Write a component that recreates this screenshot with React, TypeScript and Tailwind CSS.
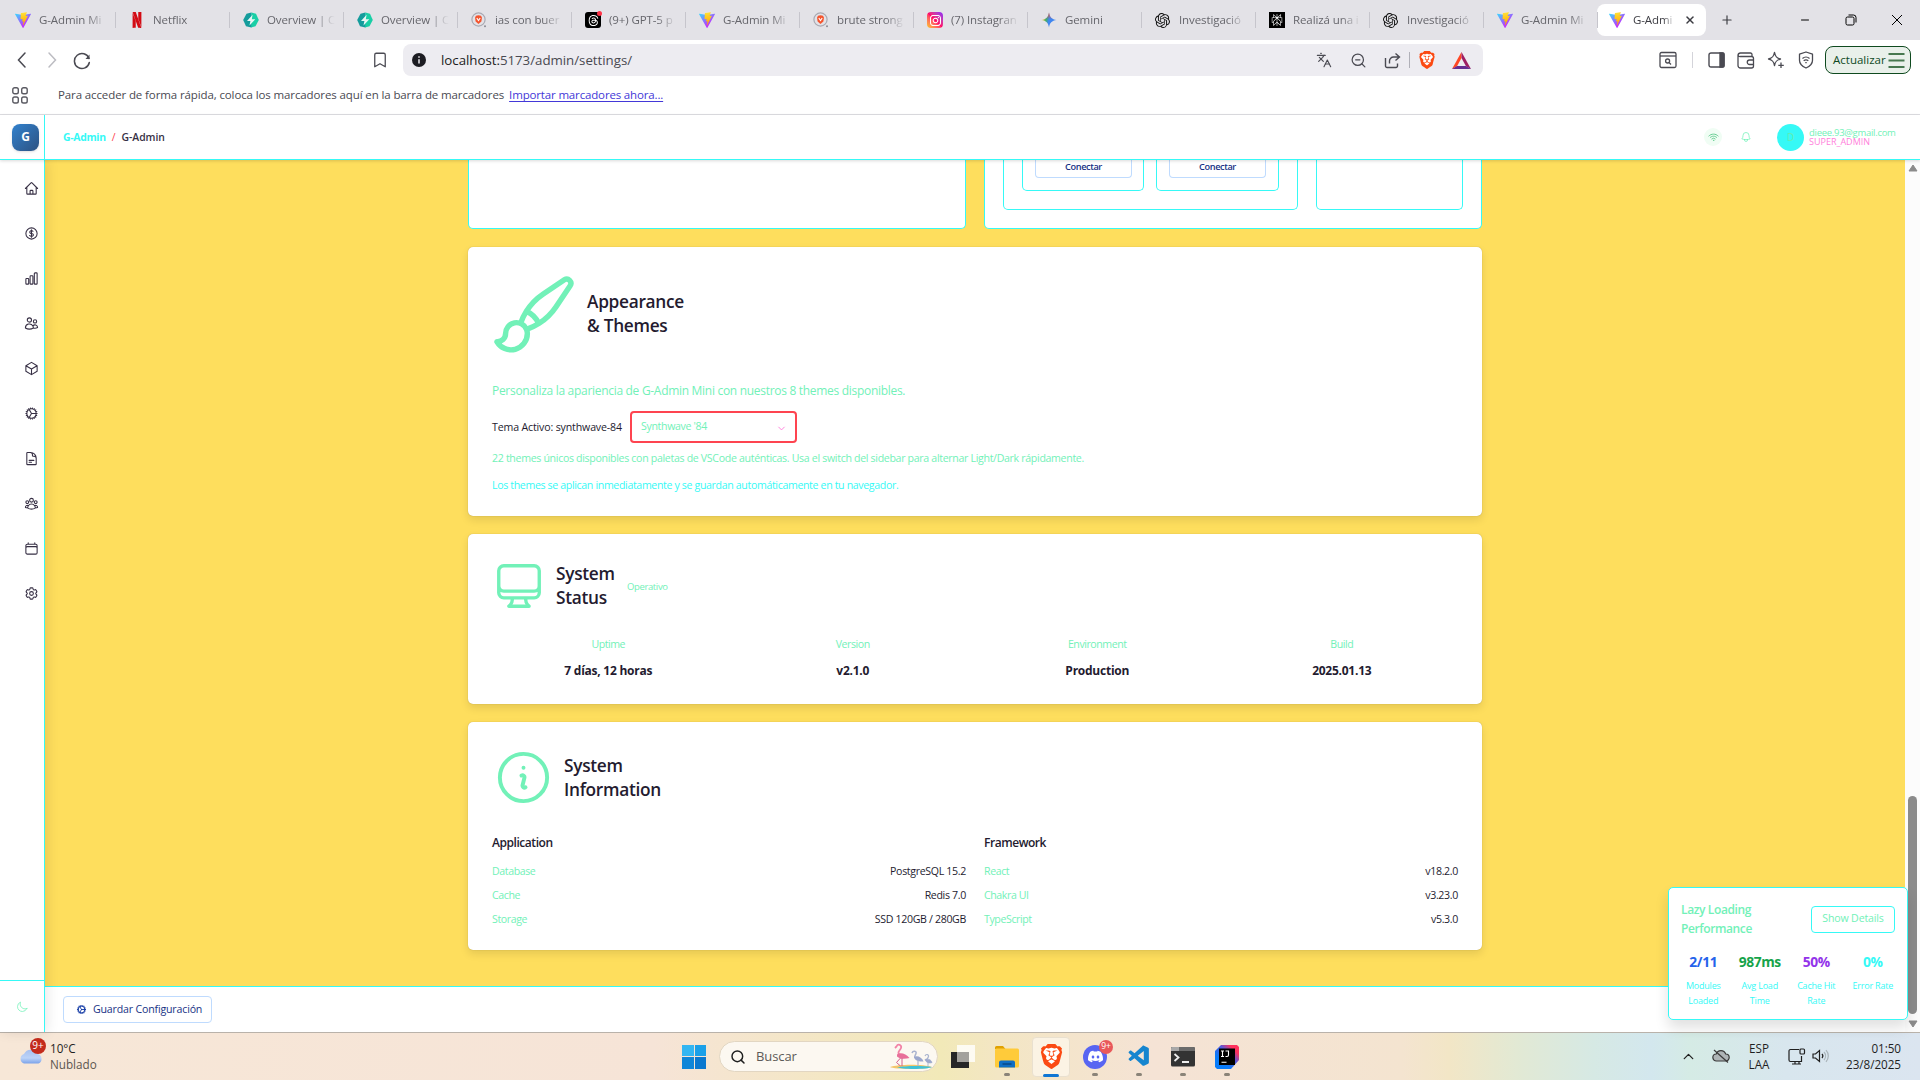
import type { ReactNode } from "react";
import {
  HiOutlineHome, HiOutlineCurrencyDollar, HiOutlineChartBar, HiOutlineUsers, HiOutlineCube, HiOutlineCog,
  HiOutlineDocumentText, HiOutlineUserGroup, HiOutlineCalendar, HiOutlineCog6Tooth, HiOutlineMoon, HiOutlineWifi,
  HiOutlineBell, HiOutlinePaintBrush, HiOutlineComputerDesktop, HiOutlineInformationCircle, HiOutlineChevronDown,
} from "react-icons/hi2";
import { SiNetflix, SiBrave, SiOpenai, SiThreads, SiInstagram, SiPerplexity, SiDiscord } from "react-icons/si";
import { VscVscode } from "react-icons/vsc";
import { Languages, ZoomOut, X, Plus, Minus, Bookmark, ChevronUp, Search } from "lucide-react";

const ViteIcon = () => (
  <svg width="16" height="16" viewBox="0 0 256 257" className="shrink-0">
    <defs>
      <linearGradient id="vite-a" x1="0%" x2="58%" y1="8%" y2="79%">
        <stop offset="0%" stopColor="#41D1FF" />
        <stop offset="100%" stopColor="#BD34FE" />
      </linearGradient>
      <linearGradient id="vite-b" x1="43%" x2="50%" y1="2%" y2="89%">
        <stop offset="0%" stopColor="#FFEA83" />
        <stop offset="8%" stopColor="#FFDD35" />
        <stop offset="100%" stopColor="#FFA800" />
      </linearGradient>
    </defs>
    <path fill="url(#vite-a)" d="M255.153 37.938L134.897 252.976c-2.483 4.44-8.862 4.466-11.382.048L.875 37.958c-2.746-4.814 1.371-10.646 6.827-9.67l120.385 21.517a6.537 6.537 0 0 0 2.322-.004l117.867-21.483c5.438-.991 9.574 4.796 6.877 9.62Z" />
    <path fill="url(#vite-b)" d="M185.432.063L96.44 17.501a3.268 3.268 0 0 0-2.634 3.014l-5.474 92.456a3.268 3.268 0 0 0 3.997 3.378l24.777-5.718c2.318-.535 4.413 1.507 3.936 3.838l-7.361 36.047c-.495 2.426 1.782 4.5 4.151 3.78l15.304-4.649c2.372-.72 4.652 1.36 4.15 3.788l-11.698 56.621c-.732 3.542 3.979 5.473 5.943 2.437l1.313-2.028l72.516-144.72c1.215-2.423-.88-5.186-3.54-4.672l-25.505 4.922c-2.396.462-4.435-1.77-3.759-4.114l16.646-57.705c.677-2.35-1.37-4.583-3.769-4.113Z" />
  </svg>
);

const OverviewIcon = () => (
  <svg width="16" height="16" viewBox="0 0 16 16" className="shrink-0">
    <path d="M8.300 0.500 13 1.800 15.800 8 12.500 14.200 8 15.500z" fill="#19cfa6" />
    <path d="M8.300 0.500 3.500 1.800 0.200 8 3 14.200 8.300 15.500z" fill="#149c9c" />
    <path d="M9.600 2.800 4 9h3.400l-.9 4.500L12.300 7.200H8.800z" fill="#e9f7f5" />
  </svg>
);

const BraveSearchIcon = () => (
  <svg width="16" height="16" viewBox="0 0 16 16" className="shrink-0">
    <circle cx="7.5" cy="7.5" r="6.6" fill="none" stroke="#a9a9b2" strokeWidth="1.2" />
    <path d="M7.5 3.2 10 3.7l1 1.7-.6 4L7.5 12 4.6 9.4 4 5.4l1-1.7z" fill="#f4552f" />
    <path d="M5.8 6l1.7 2.6L9.2 6" fill="none" stroke="#fff" strokeWidth="1.1" />
    <circle cx="14" cy="14.2" r="1" fill="#8d8d96" />
  </svg>
);

const ThreadsIcon = () => (
  <span className="relative flex size-4 shrink-0 items-center justify-center rounded-[3px] bg-black text-white">
    <SiThreads size={11} />
    <span className="absolute -top-px -right-px size-[5px] rounded-full bg-[#ff3347]" />
  </span>
);

const InstagramIcon = () => (
  <span className="flex size-4 shrink-0 items-center justify-center rounded-[4px] bg-linear-to-tr from-[#ffc400] via-[#ff0069] to-[#8a00ff] text-white">
    <SiInstagram size={11} />
  </span>
);

const GeminiIcon = () => (
  <svg width="16" height="16" viewBox="0 0 16 16" className="shrink-0">
    <defs>
      <linearGradient id="gem" x1="0" x2="1" y1="0.4" y2="0.6">
        <stop offset="0.05" stopColor="#f6c012" />
        <stop offset="0.3" stopColor="#3fae6a" />
        <stop offset="0.5" stopColor="#3f86f0" />
        <stop offset="1" stopColor="#3f86f0" />
      </linearGradient>
      <linearGradient id="gem2" x1="0" x2="0" y1="0" y2="1">
        <stop offset="0" stopColor="#f0453c" />
        <stop offset="0.45" stopColor="#f0453c" stopOpacity="0" />
      </linearGradient>
    </defs>
    <path d="M8 .5C8.600 5 11 7.400 15.500 8 11 8.600 8.600 11 8 15.500 7.400 11 5 8.600.5 8 5 7.400 7.400 5 8 .5z" fill="url(#gem)" />
    <path d="M8 .5C8.600 5 11 7.400 15.500 8 11 8.600 8.600 11 8 15.500 7.400 11 5 8.600.5 8 5 7.400 7.400 5 8 .5z" fill="url(#gem2)" />
  </svg>
);

const PerplexityIcon = () => (
  <span className="flex size-4 shrink-0 items-center justify-center bg-black text-white">
    <SiPerplexity size={12} />
  </span>
);

const tabs: { icon: ReactNode; title: string }[] = [
  { icon: <ViteIcon />, title: "G-Admin Mi" },
  { icon: <SiNetflix size={16} className="shrink-0 text-[#d30b14]" />, title: "Netflix" },
  { icon: <OverviewIcon />, title: "Overview | C" },
  { icon: <OverviewIcon />, title: "Overview | C" },
  { icon: <BraveSearchIcon />, title: "ias con buer" },
  { icon: <ThreadsIcon />, title: "(9+) GPT-5 p" },
  { icon: <ViteIcon />, title: "G-Admin Mi" },
  { icon: <BraveSearchIcon />, title: "brute strong" },
  { icon: <InstagramIcon />, title: "(7) Instagran" },
  { icon: <GeminiIcon />, title: "Gemini" },
  { icon: <SiOpenai size={15} className="mr-px shrink-0 text-[#111]" />, title: "Investigació" },
  { icon: <PerplexityIcon />, title: "Realizá una i" },
  { icon: <SiOpenai size={15} className="mr-px shrink-0 text-[#111]" />, title: "Investigació" },
  { icon: <ViteIcon />, title: "G-Admin Mi" },
];

const fade = "overflow-hidden whitespace-nowrap";

function TabStrip() {
  return (
    <div className="flex h-10 shrink-0 items-center bg-[#e3e2e7] text-[11.5px] tracking-[-0.1px] text-[#66666c]">
      {tabs.map((t, i) => (
        <div key={i} className="flex h-10 w-[114px] shrink-0 items-center pl-[15px]">
          {t.icon}
          <span className={`ml-2 w-[70px] [mask-image:linear-gradient(to_right,#000_68%,transparent_97%)] ${fade}`}>{t.title}</span>
          <span className="ml-auto h-4 w-px translate-x-[2px] bg-[#c6c5cc]" />
        </div>
      ))}
      <div className="ml-[1px] flex h-8 w-[109px] shrink-0 items-center rounded-lg bg-white pl-[12px] text-[#3c3c42]">
        <ViteIcon />
        <span className={`ml-2 w-[42px] [mask-image:linear-gradient(to_right,#000_72%,transparent)] ${fade}`}>G-Admi</span>
        <X size={12} strokeWidth={3} className="ml-[9px]" />
      </div>
      <Plus size={14} className="ml-[14px] text-[#3c3c42]" />
      <div className="ml-auto flex items-center pr-[17px] text-black">
        <Minus size={12} strokeWidth={2} className="mr-[34px]" />
        <svg width="12" height="12" viewBox="0 0 12 12" fill="none" stroke="currentColor" className="mr-[34px]">
          <rect x="1" y="3" width="8" height="8" rx="1.5" />
          <path d="M3.500 1h5a2.500 2.500 0 0 1 2.500 2.500v5" />
        </svg>
        <svg width="12" height="12" viewBox="0 0 12 12" fill="none" stroke="currentColor">
          <path d="M1 1l10 10M11 1L1 11" />
        </svg>
      </div>
    </div>
  );
}

const BraveIcon = ({ size }: { size: number }) => (
  <span className="relative flex items-center justify-center">
    <svg width={size} height={size} viewBox="0 0 24 24">
      <path d="M5 4l4-2h6l4 2 2 3-1 9-8 6-8-6-1-9z" fill="#fff" />
    </svg>
    <SiBrave size={size} className="absolute text-[#fb4a13]" />
  </span>
);

function Toolbar() {
  return (
    <div className="flex h-10 shrink-0 items-center bg-white text-[#4a4a52]">
      <svg width="76" height="20" viewBox="0 0 76 20" fill="none" stroke="currentColor" strokeWidth="1.500" className="ml-4" strokeLinecap="round">
        <path d="M9 3L2.500 10 9 17" />
        <path d="M33 3l6.500 7-6.500 7" stroke="#bcbcc2" />
        <path d="M73 8.500a7.500 7.500 0 1 0 .300 4" />
        <path d="M73.500 4.500v4.500H69.500z" fill="currentColor" stroke="none" />
      </svg>
      <Bookmark size={18} strokeWidth={1.7} className="ml-[279px]" />
      <div className="ml-[14px] flex h-8 w-[1080px] items-center rounded-lg bg-[#edecf1] pl-[9px]">
        <svg width="14" height="14" viewBox="0 0 14 14">
          <circle cx="7" cy="7" r="7" fill="#1c1c22" />
          <path d="M7 6.200v4.200M7 3.300v1.500" stroke="#edecf1" strokeWidth="1.500" />
        </svg>
        <span className="ml-[15px] w-[875px] pt-px text-[13.3px] tracking-[-0.03px] text-[#4a4a52]">
          <span className="text-[#1c1c22]">localhost:</span>5173/admin/settings/
        </span>
        <Languages size={16} strokeWidth={1.7} />
        <ZoomOut size={17} strokeWidth={1.7} className="ml-[18px]" />
        <svg width="17" height="17" viewBox="0 0 17 17" fill="none" stroke="currentColor" strokeWidth="1.400" className="ml-[17px]">
          <path d="M1.500 6v8a1.500 1.500 0 0 0 1.500 1.500h9a1.500 1.500 0 0 0 1.500-1.500v-2.500M5.500 11.500V9a4 4 0 0 1 4-4h5M11.500 1.500L15.500 5l-4 3.500" />
        </svg>
        <span className="mx-[8px] h-4 w-px bg-[#b0b0b8]" />
        <BraveIcon size={18} />
        <svg width="19" height="17" viewBox="0 0 19 17" className="ml-[16px]">
          <path d="M9.500 0L0 17l5-2.800L9.500 6z" fill="#ff4724" />
          <path d="M9.500 0L19 17l-5-2.800L9.500 6z" fill="#9e1f63" />
          <path d="M0 17h19l-5-3H5z" fill="#662d91" />
        </svg>
      </div>
      <svg width="18" height="18" viewBox="0 0 18 18" fill="none" stroke="currentColor" strokeWidth="1.300" className="ml-[176px]">
        <rect x="1" y="1.500" width="16" height="15" rx="1.500" />
        <path d="M1 5h16" />
        <circle cx="8.600" cy="10" r="2" />
        <path d="M10 11.500l2 2" />
      </svg>
      <span className="mx-[15px] h-4 w-px bg-[#d4d4da]" />
      <svg width="17" height="16" viewBox="0 0 17 16" fill="none" stroke="currentColor" strokeWidth="1.400">
        <rect x="1" y="1" width="15" height="14" rx="2" />
        <path d="M12 1h3a1 1 0 0 1 1 1v12a1 1 0 0 1-1 1h-3z" fill="currentColor" />
      </svg>
      <svg width="18" height="17" viewBox="0 0 18 17" fill="none" stroke="currentColor" strokeWidth="1.300" className="ml-[12px]">
        <path d="M15 4.500V2.500a1.500 1.500 0 0 0-1.500-1.500h-10A2.500 2.500 0 0 0 1 3.200V13.500A2.500 2.500 0 0 0 3.500 16h11a2 2 0 0 0 2-2V6.500a2 2 0 0 0-2-2h-11A2 2 0 0 1 1 3" />
        <path d="M17 8h-4.500a2 2 0 0 0 0 4.500H17" />
      </svg>
      <svg width="18" height="18" viewBox="0 0 18 18" fill="none" stroke="currentColor" strokeWidth="1.300" className="ml-[12px]" strokeLinejoin="round">
        <path d="M7.500 1.500c.8 4 2 5.500 6 6.500-4 1-5.200 2.500-6 6.500-.8-4-2-5.500-6-6.500 4-1 5.200-2.500 6-6.500zM14 11.500v5.500M11.300 14.300h5.500" />
      </svg>
      <svg width="16" height="18" viewBox="0 0 16 18" fill="none" stroke="currentColor" strokeWidth="1.300" className="ml-[13px]" strokeLinejoin="round">
        <path d="M8 1l6.500 2.200v6c0 3.800-3 6.300-6.500 7.800-3.500-1.500-6.500-4-6.500-7.800v-6z" />
        <path d="M4.500 7.500c2-1.800 5-1.800 7 0M5.700 9.700c1.400-1.100 3.200-1.100 4.600 0M7.300 11.700h1.400" />
      </svg>
      <div className="ml-[11px] flex h-7 w-[86px] items-center justify-between rounded-lg border border-[#0f4a1f] bg-[#e9f0ea] pr-[5px] pl-[7px] text-[11.5px] whitespace-nowrap text-[#0f4a1f]">
        Actualizar
        <svg width="17" height="15" viewBox="0 0 17 15" stroke="#47784f" strokeWidth="1.800">
          <path d="M.5 1h16M.5 7.500h16M.5 14h16" />
        </svg>
      </div>
    </div>
  );
}

function BookmarksBar() {
  return (
    <div className="flex h-[35px] shrink-0 items-center border-b border-[#dedee2] bg-white pb-[4px] pl-3 text-[11.5px] whitespace-nowrap text-[#4a4a52]">
      <svg width="17" height="17" viewBox="0 0 17 17" fill="none" stroke="#5a5a62" strokeWidth="1.400">
        <rect x=".8" y=".8" width="5.500" height="6" rx="1.800" />
        <rect x="9.700" y=".8" width="5.500" height="6" rx="1.800" />
        <rect x=".8" y="10" width="5.500" height="6" rx="1.800" />
        <rect x="9.700" y="10" width="5.500" height="6" rx="1.800" />
      </svg>
      <span className="ml-[29px] tracking-[-0.115px]">Para acceder de forma rápida, coloca los marcadores aquí en la barra de marcadores</span>
      <span className="ml-[5px] tracking-[-0.157px] text-[#4338d8] underline underline-offset-2">Importar marcadores ahora...</span>
    </div>
  );
}

function AppHeader() {
  return (
    <header className="relative z-10 flex h-[45px] shrink-0 border-b border-[#36f9f6] bg-white shadow-[0_1px_3px_rgba(0,0,0,0.15)]">
      <div className="flex w-[45px] items-center justify-end border-r border-[#36f9f6] pr-[5px]">
        <div className="flex size-[27px] items-center justify-center rounded-lg bg-linear-to-br from-[#3182ce] to-[#2c5282] text-[12px] font-bold text-white shadow-sm">G</div>
      </div>
      <div className="ml-[18px] flex items-center pt-px text-[10.4px]">
        <span className="font-bold tracking-[-0.3px] text-[#36f9f6]">G-Admin</span>
        <span className="mx-[6px] text-[#fe4450]">/</span>
        <span className="font-semibold tracking-[-0.05px] text-[#362f44]">G-Admin</span>
      </div>
      <div className="ml-auto flex items-center">
        <span className="flex size-[18px] items-center justify-center rounded-full bg-[#f0fdf4]">
          <HiOutlineWifi size={11} className="stroke-2 text-[#5cc98a]" />
        </span>
        <HiOutlineBell size={12} className="ml-[18px] text-[#72f1b8]" />
        <span className="ml-[25px] flex size-[27px] items-center justify-center rounded-full bg-[#36f9f6] text-[9.900px] text-[#62efae]">D</span>
        <div className="ml-[5px] w-[111px] whitespace-nowrap">
          <div className="h-[10px] text-[9.5px] leading-[11px] font-medium tracking-[-0.28px] text-[#72f1b8]">dieee.93@gmail.com</div>
          <div className="h-[10px] text-[9px] leading-[9px] text-[#ff7edb]">SUPER_ADMIN</div>
        </div>
      </div>
    </header>
  );
}

const nav = [
  HiOutlineHome, HiOutlineCurrencyDollar, HiOutlineChartBar, HiOutlineUsers, HiOutlineCube,
  HiOutlineCog, HiOutlineDocumentText, HiOutlineUserGroup, HiOutlineCalendar, HiOutlineCog6Tooth,
];

function Sidebar() {
  return (
    <aside className="relative z-[5] flex w-[45px] shrink-0 flex-col border-r border-[#36f9f6] bg-white shadow-[2px_0_12px_rgba(0,0,0,0.1)]">
      <nav className="flex h-[820px] flex-col pt-[6px] pl-[24px] text-[#362f44]">
        {nav.map((Icon, i) => (
          <span key={i} className="flex h-[45px] items-center">
            <Icon size={15} className="stroke-[1.700]" />
          </span>
        ))}
      </nav>
      <div className="flex flex-1 items-center justify-center border-t border-[#36f9f6]">
        <HiOutlineMoon size={12} className="text-[#72f1b8]" />
      </div>
    </aside>
  );
}

const Connect = ({ className }: { className: string }) => (
  <div className={`h-[31px] rounded-b-[5px] border border-t-0 border-[#36f9f6] pl-3 ${className}`}>
    <div className="flex h-[18px] w-[97px] items-center justify-center rounded-b-[4px] border border-t-0 border-[#bfdbfe] pb-[4px] text-[9.2px] font-semibold tracking-[-0.4px] text-[#173285]">
      Conectar
    </div>
  </div>
);

function TopRow() {
  return (
    <div className="flex h-[69px] gap-[18px]">
      <div className="w-[498px] rounded-b-[5px] border border-t-0 border-[#36f9f6] bg-white" />
      <div className="flex w-[498px] gap-[18px] rounded-b-[5px] border border-t-0 border-[#36f9f6] bg-white pl-[18px]">
        <div className="flex h-[50px] w-[295px] gap-3 rounded-b-[5px] border border-t-0 border-[#36f9f6] pl-[18px]">
          <Connect className="w-[122px]" />
          <Connect className="w-[123px]" />
        </div>
        <div className="h-[50px] w-[147px] rounded-b-[5px] border border-t-0 border-[#36f9f6]" />
      </div>
    </div>
  );
}

const card = "rounded-[5px] bg-white px-6 shadow-[0_4px_8px_rgba(0,0,0,0.1),0_0_1px_rgba(0,0,0,0.3)]";
const heading = "text-[17.3px] leading-6 font-semibold tracking-[-0.3px] text-[#241b2f]";

function Appearance() {
  return (
    <section className={`h-[269px] ${card}`}>
      <div className="flex h-[134px] items-center">
        <HiOutlinePaintBrush size={87} className="shrink-0 text-[#72f1b8]" />
        <h2 className={`ml-[8px] ${heading}`}>Appearance<br />&amp; Themes</h2>
      </div>
      <p className="flex h-[20px] items-center text-[12px] tracking-[-0.3px] text-[#72f1b8]">
        Personaliza la apariencia de G-Admin Mini con nuestros 8 themes disponibles.
      </p>
      <div className="mt-[10px] flex h-[32px] items-center text-[10.6px]">
        <span className="w-[138px] pt-[2px] font-medium tracking-[-0.15px] text-[#241b2f]">Tema Activo: synthwave-84</span>
        <div className="flex h-[32px] w-[167px] items-center justify-between rounded-[4px] border-2 border-[#fe4450] px-[9px] tracking-[-0.34px] text-[#72f1b8]">
          Synthwave '84
          <HiOutlineChevronDown size={9} className="mt-[2px] stroke-[2.5] text-[#ff7edb]" />
        </div>
      </div>
      <p className="mt-[7px] flex h-[18px] items-center text-[10.6px] tracking-[-0.322px] whitespace-nowrap text-[#72f1b8]">
        22 themes únicos disponibles con paletas de VSCode auténticas. Usa el switch del sidebar para alternar Light/Dark rápidamente.
      </p>
      <p className="mt-[9px] flex h-[18px] items-center text-[10.6px] tracking-[-0.352px] whitespace-nowrap text-[#36f9f6]">
        Los themes se aplican inmediatamente y se guardan automáticamente en tu navegador.
      </p>
    </section>
  );
}

const stats = [
  ["Uptime", "7 días, 12 horas"],
  ["Version", "v2.1.0"],
  ["Environment", "Production"],
  ["Build", "2025.01.13"],
];

function Status() {
  return (
    <section className={`h-[170px] ${card}`}>
      <div className="flex h-[104px] items-center">
        <HiOutlineComputerDesktop size={54} className="shrink-0 text-[#72f1b8]" />
        <h2 className={`ml-[10px] w-[71px] ${heading}`}>System<br />Status</h2>
        <span className="pt-[2px] text-[9.5px] tracking-[-0.37px] text-[#72f1b8]">Operativo</span>
      </div>
      <div className="grid grid-cols-4 gap-3 text-center">
        {stats.map(([k, v]) => (
          <div key={k}>
            <div className="h-[12px] text-[10.6px] leading-[12px] tracking-[-0.45px] text-[#72f1b8]">{k}</div>
            <div className="mt-[12px] text-[12px] leading-[18px] font-bold tracking-[-0.25px] text-[#241b2f]">{v}</div>
          </div>
        ))}
      </div>
    </section>
  );
}

const info = [
  { title: "Application", rows: [["Database", "PostgreSQL 15.2"], ["Cache", "Redis 7.0"], ["Storage", "SSD 120GB / 280GB"]] },
  { title: "Framework", rows: [["React", "v18.2.0"], ["Chakra UI", "v3.23.0"], ["TypeScript", "v5.3.0"]] },
];

function Information() {
  return (
    <section className={`h-[228px] ${card}`}>
      <div className="flex h-[112px] items-center">
        <HiOutlineInformationCircle size={63} className="mb-px shrink-0 text-[#72f1b8]" />
        <h2 className={`ml-[9px] ${heading}`}>System<br />Information</h2>
      </div>
      <div className="grid grid-cols-2 gap-[18px]">
        {info.map((c) => (
          <div key={c.title}>
            <h3 className="text-[12px] leading-[18px] font-semibold tracking-[-0.45px] text-[#241b2f]">{c.title}</h3>
            <div className="mt-[8px]">
              {c.rows.map(([k, v]) => (
                <div key={k} className="flex h-6 items-center justify-between text-[10.6px]">
                  <span className="tracking-[-0.4px] text-[#72f1b8]">{k}</span>
                  <span className="tracking-[-0.33px] text-[#241b2f]">{v}</span>
                </div>
              ))}
            </div>
          </div>
        ))}
      </div>
    </section>
  );
}

function PerfPanel() {
  return (
    <div className="absolute top-[727px] right-[12px] z-20 h-[133px] w-[240px] rounded-[5px] border border-[#36f9f6] bg-white px-3 shadow-[0_8px_14px_rgba(0,0,0,0.12)]">
      <div className="flex h-[64px] items-center justify-between pb-[2px]">
        <div className="text-[12px] leading-[19px] font-semibold tracking-[-0.39px] text-[#72f1b8]">Lazy Loading<br />Performance</div>
        <div className="flex h-[27px] w-[84px] items-center justify-center rounded-[4px] border border-[#36f9f6] text-[10.6px] font-medium tracking-[-0.15px] text-[#72f1b8]">Show Details</div>
      </div>
      <div className="-mx-[6px] grid grid-cols-4 text-center text-[9px] leading-[15px] tracking-[-0.2px] text-[#36f9f6]">
        <div><div className="mb-[6px] text-[13.8px] leading-[20px] font-bold tracking-[-0.4px] text-[#2563eb]">2/11</div>Modules<br />Loaded</div>
        <div><div className="mb-[6px] text-[13.8px] leading-[20px] font-bold tracking-[-0.4px] text-[#16a34a]">987ms</div>Avg Load<br />Time</div>
        <div><div className="mb-[6px] text-[13.8px] leading-[20px] font-bold tracking-[-0.4px] text-[#9333ea]">50%</div>Cache Hit<br />Rate</div>
        <div><div className="mb-[6px] text-[13.8px] leading-[20px] font-bold tracking-[-0.4px]">0%</div>Error Rate</div>
      </div>
    </div>
  );
}

function Taskbar() {
  return (
    <footer className="flex h-12 shrink-0 border-t border-[#b9b2aa] bg-[linear-gradient(90deg,#f7e7d7_0%,#f6e4d7_34%,#f2e9b8_49%,#f3e6c4_52%,#f5e3d5_60%,#f4e4d0_73%,#f2e6c6_75.5%,#e2e9d4_79%,#d6e9e4_83%,#d3e7ee_86%,#d5ebe5_88%,#d8e6ee_93%,#dbe5f0_100%)] text-[11.7px] text-[#1f1f1f]">
      <div className="flex w-[682px] items-center pb-[2px] pl-[18px]">
        <div className="relative h-8 w-[26px]">
          <svg width="26" height="18" viewBox="0 0 26 18" className="mt-[8px]">
            <defs>
              <linearGradient id="cloud" x1="0" x2="0" y1="0" y2="1">
                <stop offset="0" stopColor="#a8c0ee" />
                <stop offset=".6" stopColor="#bcd3f8" />
                <stop offset="1" stopColor="#7ba3ea" />
              </linearGradient>
            </defs>
            <path d="M6 15.500a5 5 0 0 1 0-9.500 7.500 7.500 0 0 1 13.500 0A5 5 0 0 1 20.500 15.500z" fill="url(#cloud)" />
          </svg>
          <span className="absolute -top-[2px] left-[12px] flex size-4 items-center justify-center rounded-full bg-[#c42b1c] text-[10px] text-white">9+</span>
        </div>
        <div className="ml-[6px] leading-4">
          <div>10°C</div>
          <div className="text-[#5c564f]">Nublado</div>
        </div>
      </div>
      <div className="flex items-center">
        <div className="grid size-6 grid-cols-2 gap-px">
          <span className="bg-[#33b6f2]" /><span className="bg-[#1ba0e8]" />
          <span className="bg-[#0f86d8]" /><span className="bg-[#0a78cf]" />
        </div>
        <div className="ml-[13px] flex h-[31px] w-[219px] items-center rounded-full border border-[#e2d6c2] bg-[#fcf8f1] pl-[10px]">
          <Search size={16} strokeWidth={2.2} />
          <span className="ml-[10px] w-[133px] text-[13px] tracking-[-0.1px] text-[#5c5a57]">Buscar</span>
          <svg width="44" height="27" viewBox="0 0 44 27" fill="none">
            <path d="M1 24c8-3 34-3 42 0-4 2.500-38 2.500-42 0z" fill="#f3c66a" />
            <path d="M8 24.500c8-2 26-2 35-.5-4 2.500-30 2.500-35 .5z" fill="#3fc1d6" />
            <path d="M6 5l1.500-1.500C9 0 13 2 12 5s-4 3.500-2 6.500" stroke="#f283a6" strokeWidth="1.800" />
            <path d="M8 11.500c3-2.500 9-1 12.500 3.500-4 1-9.500 1.500-12.500-1.500z" fill="#e8709a" />
            <path d="M13 15v8M11.500 15l-4 4.500 4 3.500" stroke="#d4608c" strokeWidth="1" />
            <path d="M23 10c1-3 5-2 4 .5s-2 2.500-1 4.500" stroke="#aab4cf" strokeWidth="1.500" />
            <path d="M25 14c3-2 8 0 9.500 4.500-4 .5-8.500-.5-9.500-4.500z" fill="#9ba7cc" />
            <path d="M29 17v6M36 13c1-2.500 4-1.500 3.500.5s-2 2.500-2.500 4" stroke="#aab4cf" strokeWidth="1.200" />
            <path d="M36 16.500c3-1 6 0 7 3-3 1-6 0-7-3zM39 19v4" fill="#9ba7cc" stroke="#9ba7cc" strokeWidth=".8" />
          </svg>
        </div>
        <div className="ml-[3px] flex items-center">
          <div className="flex h-12 w-11 items-center justify-center">
            <svg width="24" height="24" viewBox="0 0 24 24">
              <rect x="0" y="7" width="18" height="16" fill="#262626" />
              <rect x="6" y="0" width="18" height="17" fill="#fff" fillOpacity=".8" />
              <rect x="6" y="7" width="12" height="10" fill="#a3a19c" />
            </svg>
          </div>
          <div className="relative flex h-12 w-11 items-center justify-center">
            <svg width="24" height="24" viewBox="0 0 24 24">
              <path d="M0 2.500A1.500 1.500 0 0 1 1.500 1H8l2.500 3H0z" fill="#e0a100" />
              <rect x="0" y="3.500" width="24" height="19" rx="1.500" fill="#ffcb3a" />
              <path d="M4 22.500v-5a2 2 0 0 1 2-2h12a2 2 0 0 1 2 2v5z" fill="#0f6fc4" />
              <path d="M7.500 19h9" stroke="#063f78" strokeWidth="1.200" />
            </svg>
            <span className="absolute bottom-[5px] h-[3px] w-[6px] rounded-full bg-[#8a8378]" />
          </div>
          <div className="relative flex h-[40px] w-11 items-center justify-center">
            <span className="absolute top-0 left-[3px] h-[40px] w-[38px] rounded-[4px] border border-[#e9e0cf] bg-[#fbf3e4]" />
            <BraveIcon size={25} />
            <span className="absolute bottom-0 h-[3px] w-4 rounded-full bg-[#0f76d4]" />
          </div>
          <div className="relative flex h-12 w-11 items-center justify-center">
            <span className="flex size-6 items-center justify-center rounded-full bg-[#5865f2] text-white"><SiDiscord size={15} /></span>
            <span className="absolute top-[7px] right-[4px] flex size-[14px] items-center justify-center rounded-full bg-[#e9585a] text-[8.5px] text-white">9+</span>
            <span className="absolute bottom-[5px] h-[3px] w-[6px] rounded-full bg-[#8a8378]" />
          </div>
          <div className="relative flex h-12 w-11 items-center justify-center">
            <VscVscode size={25} className="text-[#1685cf]" />
            <span className="absolute bottom-[5px] h-[3px] w-[6px] rounded-full bg-[#8a8378]" />
          </div>
          <div className="relative flex h-12 w-11 items-center justify-center">
            <svg width="24" height="20" viewBox="0 0 24 20">
              <rect width="24" height="19.500" rx="1.500" fill="#333" />
              <path d="M0 1.500A1.500 1.500 0 0 1 1.500 0h21A1.500 1.500 0 0 1 24 1.500V4H0z" fill="#6b6b6b" />
              <path d="M0 4V1.500A1.500 1.500 0 0 1 1.500 0H8v4z" fill="#a8a8a8" />
              <path d="M3.500 7l4 3.500-4 3.500M11 15h7" fill="none" stroke="#eee" strokeWidth="1.800" />
            </svg>
            <span className="absolute bottom-[5px] h-[3px] w-[6px] rounded-full bg-[#8a8378]" />
          </div>
          <div className="relative flex h-12 w-11 items-center justify-center">
            <svg width="24" height="24" viewBox="0 0 24 24">
              <defs>
                <linearGradient id="ij" x1="0" x2="1" y1="1" y2="0">
                  <stop offset=".3" stopColor="#087cfa" />
                  <stop offset=".6" stopColor="#5a57d8" />
                  <stop offset=".8" stopColor="#fe315d" />
                </linearGradient>
              </defs>
              <path d="M6 0h16l2 2v13l-8 9H2l-2-2V6z" fill="url(#ij)" />
              <rect x="4" y="3.500" width="16" height="16.500" fill="#000" />
              <path d="M6 6h3M7.500 6v5.500M6 11.500h3M10.500 6h3v4q0 1.500-1.500 1.500h-1.500M6.500 17.300h5" stroke="#fff" strokeWidth="1.100" fill="none" />
            </svg>
            <span className="absolute bottom-[5px] h-[3px] w-[6px] rounded-full bg-[#8a8378]" />
          </div>
        </div>
      </div>
      <div className="ml-auto flex items-center pr-[19px] pb-px">
        <ChevronUp size={17} strokeWidth={1.8} />
        <svg width="18" height="14" viewBox="0 0 18 14" fill="none" stroke="#3a3a3a" strokeWidth="1.200" className="ml-[15px]">
          <path d="M4.500 12a3.500 3.500 0 0 1-.3-7 5 5 0 0 1 9.500 0 3.500 3.500 0 0 1 0 7z" fill="#aeb4b6" />
          <path d="M2 1l14 12.500" />
        </svg>
        <div className="ml-[18px] w-[22px] text-center leading-4">ESP<br />LAA</div>
        <svg width="18" height="17" viewBox="0 0 18 17" fill="none" stroke="currentColor" strokeWidth="1.200" className="ml-[18px]">
          <path d="M11 1.500H2.500A1.500 1.500 0 0 0 1 3v9a1.500 1.500 0 0 0 1.500 1.500h11V8M4 16h9M7 13.500V16M11 13.500V16" />
          <rect x="12" y="1" width="4.500" height="5" rx="1" />
        </svg>
        <svg width="18" height="14" viewBox="0 0 18 14" fill="none" stroke="currentColor" strokeWidth="1.200" className="ml-[6px]">
          <path d="M1 5v4h2.500L7.500 12.500v-11L3.500 5z" />
          <path d="M10 5a3 3 0 0 1 0 4" />
          <path d="M12 3a6 6 0 0 1 0 8M14 1.200a8.500 8.500 0 0 1 0 11.600" stroke="#a9b3b8" />
        </svg>
        <div className="ml-[15px] w-[56px] text-right leading-4 tracking-[-0.05px]">01:50<br />23/8/2025</div>
      </div>
    </footer>
  );
}

export default function App() {
  return (
    <div className="flex h-[1080px] w-[1920px] flex-col overflow-hidden bg-white font-['Open_Sans',sans-serif]">
      <TabStrip />
      <Toolbar />
      <BookmarksBar />
      <AppHeader />
      <div className="relative flex h-[872px] shrink-0">
        <Sidebar />
        <main className="flex w-[1860px] flex-col">
          <div className="h-[826px] bg-[#fede5d]">
            <div className="mx-auto flex w-[1014px] flex-col gap-[18px]">
              <TopRow />
              <Appearance />
              <Status />
              <Information />
            </div>
          </div>
          <div className="flex flex-1 border-t border-[#36f9f6] bg-white pt-[9px] pl-[18px]">
            <button className="flex h-[27px] w-[149px] items-center rounded-[4px] border border-[#bfdbfe] pl-[12px] text-[10.6px] font-medium tracking-[-0.17px] whitespace-nowrap text-[#173285]">
              <HiOutlineCog size={11} className="mr-[6px] stroke-2 text-[#173da6]" />
              Guardar Configuración
            </button>
          </div>
        </main>
        <div className="flex w-[15px] flex-col items-center bg-[#fcfcfc]">
          <svg width="10" height="8" viewBox="0 0 10 8" className="mt-[4px]"><path d="M5 1l4 6H1z" fill="#8b8b8b" stroke="#8b8b8b" strokeLinejoin="round" /></svg>
          <div className="mt-[624px] h-[218px] w-[9px] rounded-full bg-[#8b8b8b]" />
          <svg width="10" height="8" viewBox="0 0 10 8" className="mt-[6px]"><path d="M5 7l4-6H1z" fill="#8b8b8b" stroke="#8b8b8b" strokeLinejoin="round" /></svg>
        </div>
        <PerfPanel />
      </div>
      <Taskbar />
    </div>
  );
}
